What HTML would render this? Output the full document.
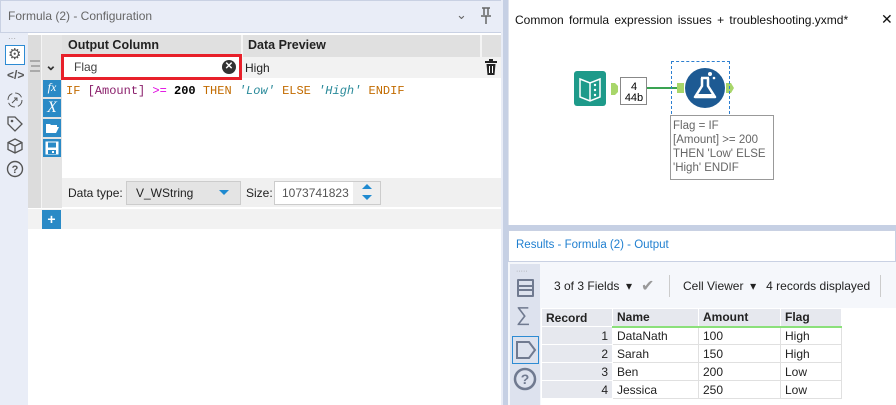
<!DOCTYPE html>
<html><head><meta charset="utf-8"><style>
*{box-sizing:border-box;margin:0;padding:0}
body{width:896px;height:405px;overflow:hidden;background:#fff;font-family:"Liberation Sans",sans-serif;font-size:12px;color:#222;position:relative}
.a{position:absolute}
.mono{font-family:"Liberation Mono",monospace}
</style></head><body>
<div class="a" style="left:0;top:0;width:503px;height:405px;background:#fff"></div>
<div class="a" style="left:0;top:0;width:503px;height:33px;background:#e9edf7;border:1px solid #c9d1e3"></div>
<div class="a" style="left:8px;top:9px;color:#666;font-size:12px">Formula (2) - Configuration</div>
<div class="a" style="left:456px;top:7px;color:#666;font-size:13px">⌄</div>
<svg class="a" style="left:479px;top:7px" width="14" height="18"><path d="M3 1h8M5 1v7M9 1v7M2 9h10M7 9v8" stroke="#666" stroke-width="1.5" fill="none"/></svg>
<div class="a" style="left:0;top:33px;width:28px;height:372px;background:#e9edf7"></div>
<div class="a" style="left:8px;top:34px;color:#999;font-size:8px">···</div>
<div class="a" style="left:5px;top:45px;width:20px;height:20px;border:1px solid #2d8bd3;background:#fff"></div>
<div class="a" style="left:8px;top:45px;color:#555;font-size:15px">⚙</div>
<div class="a" style="left:7px;top:68px;color:#555;font-size:12px;font-weight:bold">&lt;/&gt;</div>
<svg class="a" style="left:6px;top:91px" width="18" height="18"><circle cx="9" cy="9" r="7" fill="none" stroke="#555" stroke-dasharray="8 3"/><path d="M6 12l5-5M8 7h3v3" stroke="#555" fill="none"/></svg>
<svg class="a" style="left:6px;top:115px" width="18" height="18"><path d="M2 2h7l7 7-7 7-7-7z" fill="none" stroke="#555" stroke-width="1.3"/><circle cx="6" cy="6" r="1.3" fill="#555"/></svg>
<svg class="a" style="left:6px;top:137px" width="18" height="18"><path d="M9 2l7 3.5v7L9 16l-7-3.5v-7z M2 5.5L9 9l7-3.5M9 9v7" fill="none" stroke="#555" stroke-width="1.3"/></svg>
<svg class="a" style="left:6px;top:160px" width="18" height="18"><circle cx="9" cy="9" r="7.5" fill="none" stroke="#555" stroke-width="1.4"/><text x="9" y="13" font-size="11" text-anchor="middle" fill="#555" font-family="Liberation Sans" font-weight="bold">?</text></svg>
<div class="a" style="left:28px;top:35px;width:473px;height:22px;background:#e0e0e0"></div>
<div class="a" style="left:28px;top:35px;width:13px;height:173px;background:#dcdcdc"></div>
<div class="a" style="left:41px;top:35px;width:21px;height:173px;background:#e4e4e4;border-left:1px solid #f4f4f4"></div>
<div class="a" style="left:68px;top:38px;font-weight:bold;font-size:12.5px">Output Column</div>
<div class="a" style="left:241px;top:35px;width:2px;height:22px;background:#f4f4f4"></div>
<div class="a" style="left:248px;top:38px;font-weight:bold;font-size:12.5px">Data Preview</div>
<div class="a" style="left:480px;top:35px;width:2px;height:22px;background:#f4f4f4"></div>
<div class="a" style="left:62px;top:57px;width:439px;height:21px;background:#f2f2f2"></div>
<div class="a" style="left:30px;top:60px;width:10px;height:12px;border-top:2px solid #aaa;border-bottom:2px solid #aaa"></div>
<div class="a" style="left:31px;top:65px;width:9px;height:2px;background:#aaa"></div>
<div class="a" style="left:45px;top:57px;color:#333;font-size:14px;font-weight:bold">⌄</div>
<div class="a" style="left:61px;top:54px;width:181px;height:26px;border:3px solid #e8202a;background:#fff"></div>
<div class="a" style="left:74px;top:60px;color:#444">Flag</div>
<div class="a" style="left:222px;top:60px;width:14px;height:14px;border-radius:50%;background:#333;color:#fff;font-size:10px;text-align:center;line-height:14px;font-weight:bold">✕</div>
<div class="a" style="left:245px;top:61px">High</div>
<svg class="a" style="left:485px;top:59px" width="12" height="17"><rect x="0" y="2" width="12" height="2" fill="#222"/><rect x="4" y="0" width="4" height="2" fill="#222"/><path d="M1.5 5h9l-1 11h-7z" fill="#222"/><path d="M4.5 7v7M7.5 7v7" stroke="#fff"/></svg>
<div class="a" style="left:43px;top:80px;width:18px;height:17px;background:#2a8ac6;color:#fff;font-family:'Liberation Serif',serif;font-style:italic;font-size:12px;text-align:center">fx</div>
<div class="a" style="left:43px;top:99px;width:18px;height:18px;background:#2a8ac6;color:#fff;font-family:'Liberation Serif',serif;font-style:italic;font-size:16px;text-align:center;line-height:18px">X</div>
<div class="a" style="left:43px;top:119px;width:18px;height:18px;background:#2a8ac6"></div>
<svg class="a" style="left:45px;top:122px" width="14" height="12"><path d="M1 2h4l1 1h6v2H4l-3 6z M4 5h10l-3 6H1z" fill="#fff"/></svg>
<div class="a" style="left:43px;top:139px;width:18px;height:18px;background:#2a8ac6"></div>
<svg class="a" style="left:45px;top:141px" width="14" height="14"><rect x="0.5" y="0.5" width="13" height="13" fill="#fff"/><rect x="3" y="1.5" width="8" height="5" fill="#2a8ac6"/><rect x="3" y="9" width="8" height="4" fill="#2a8ac6"/><rect x="7" y="10" width="2" height="2" fill="#fff"/></svg>
<div class="a mono" style="left:66px;top:84px;font-size:12px;white-space:pre;color:#c26b00"><span>IF </span><span style="color:#8a1f6b">[Amount]</span> <span style="color:#e000e0">&gt;=</span> <b style="color:#000">200</b> THEN <i style="color:#2a8a9a">'Low'</i> ELSE <i style="color:#2a8a9a">'High'</i> ENDIF</div>
<div class="a" style="left:62px;top:178px;width:439px;height:29px;background:#f0f0f0"></div>
<div class="a" style="left:68px;top:186px">Data type:</div>
<div class="a" style="left:126px;top:181px;width:115px;height:24px;background:#e4e4e4;border:1px solid #ccc"></div>
<div class="a" style="left:136px;top:186px">V_WString</div>
<div class="a" style="left:219px;top:190px;width:0;height:0;border-left:5px solid transparent;border-right:5px solid transparent;border-top:5px solid #1f8ad0"></div>
<div class="a" style="left:246px;top:186px">Size:</div>
<div class="a" style="left:274px;top:181px;width:107px;height:24px;background:#fff;border:1px solid #ccc"></div>
<div class="a" style="left:282px;top:186px;color:#555">1073741823</div>
<div class="a" style="left:353px;top:182px;width:27px;height:22px;background:#eee"></div>
<div class="a" style="left:362px;top:184px;width:0;height:0;border-left:5px solid transparent;border-right:5px solid transparent;border-bottom:5px solid #1f8ad0"></div>
<div class="a" style="left:362px;top:195px;width:0;height:0;border-left:5px solid transparent;border-right:5px solid transparent;border-top:5px solid #1f8ad0"></div>
<div class="a" style="left:28px;top:209px;width:473px;height:20px;background:#f2f2f2"></div>
<div class="a" style="left:42px;top:210px;width:19px;height:19px;background:#2a8ac6;color:#fff;font-weight:bold;text-align:center;line-height:19px;font-size:14px">+</div>
<div class="a" style="left:503px;top:0;width:5px;height:405px;background:#c6d0e4"></div>
<div class="a" style="left:501px;top:0;width:2px;height:405px;background:#e9edf7"></div>
<div class="a" style="left:508px;top:0;width:388px;height:227px;background:#fff;border-left:1px solid #e0e4ee"></div>
<div class="a" style="left:515px;top:13px;font-size:12px;color:#111;word-spacing:2px">Common formula expression issues + troubleshooting.yxmd*</div>
<div class="a" style="left:881px;top:11px;font-size:14px;color:#111">✕</div>
<svg class="a" style="left:570px;top:66px" width="180" height="48">
<rect x="4" y="5" width="32" height="35" rx="3" fill="#1e9a8a"/>
<path d="M10 13l10 4 10-4v18l-10 4-10-4z" fill="none" stroke="#fff" stroke-width="1.5"/><path d="M20 17v18" stroke="#fff" stroke-width="1.5"/>
<circle cx="25" cy="19" r="1.2" fill="#fff"/><circle cx="25" cy="24" r="1.2" fill="#fff"/><circle cx="25" cy="29" r="1.2" fill="#fff"/>
<path d="M41 17h4l3 3v6l-3 3h-4z" fill="#a8d66a"/>
<rect x="50.5" y="11.5" width="26" height="27" fill="#fff" stroke="#888"/>
<text x="64" y="24" font-size="11" text-anchor="middle" font-family="Liberation Sans">4</text>
<text x="64" y="35" font-size="11" text-anchor="middle" font-family="Liberation Sans">44b</text>
<path d="M77 22h35" stroke="#3aa352" stroke-width="2"/>
<path d="M107 17h7v10h-7z" fill="#a8d66a"/>
<circle cx="135" cy="22" r="20" fill="#1d5a93"/>
<path d="M131 12h8M132 12v8l-7 11h20l-7-11v-8" fill="none" stroke="#fff" stroke-width="2.5" stroke-linejoin="round"/>
<path d="M127 28h16l-1 3h-14z" fill="#fff"/>
<circle cx="140" cy="8" r="2" fill="#fff"/><circle cx="144" cy="12" r="1.3" fill="#fff"/>
<path d="M156 17h5l3 5-3 5h-5z" fill="#a8d66a"/>
</svg>
<div class="a" style="left:671px;top:61px;width:59px;height:58px;border:1px dashed #2d7fd0"></div>
<div class="a" style="left:670px;top:115px;width:104px;height:65px;background:#fff;border:1px solid #999;color:#666;font-size:11.5px;line-height:14px;padding:3px 2px">Flag = IF<br>[Amount] &gt;= 200<br>THEN 'Low' ELSE<br>'High' ENDIF</div>
<div class="a" style="left:508px;top:225px;width:388px;height:5px;background:#c6d0e4"></div>
<div class="a" style="left:508px;top:230px;width:388px;height:32px;background:#fff;border:1px solid #c9d1e3"></div>
<div class="a" style="left:516px;top:239px;color:#1f7fd0;font-size:11.5px">Results - Formula (2) - Output</div>
<div class="a" style="left:508px;top:262px;width:388px;height:143px;background:#f5f7fb"></div>
<div class="a" style="left:510px;top:264px;width:30px;height:141px;background:#dde2ee"></div>
<div class="a" style="left:516px;top:268px;color:#999;font-size:7px">·····</div>
<div class="a" style="left:517px;top:279px;width:17px;height:18px;border:2px solid #707a90;border-radius:1px"></div>
<div class="a" style="left:517px;top:285px;width:17px;height:6px;border-top:2px solid #707a90;border-bottom:2px solid #707a90"></div>
<div class="a" style="left:516px;top:304px;color:#707a90;font-size:20px">∑</div>
<div class="a" style="left:512px;top:336px;width:27px;height:28px;border:1px solid #2d8bd3"></div>
<svg class="a" style="left:515px;top:339px" width="22" height="22"><path d="M2 3h12l6 8-6 8H2z" fill="none" stroke="#707a90" stroke-width="2"/></svg>
<svg class="a" style="left:513px;top:367px" width="24" height="24"><circle cx="12" cy="12" r="10" fill="none" stroke="#707a90" stroke-width="2.5"/><text x="12" y="17" font-size="14" text-anchor="middle" fill="#707a90" font-family="Liberation Sans" font-weight="bold">?</text></svg>
<div class="a" style="left:541px;top:262px;width:355px;height:46px;background:#f5f7fb"></div>
<div class="a" style="left:554px;top:279px">3 of 3 Fields&nbsp;&nbsp;▾</div>
<div class="a" style="left:641px;top:276px;color:#999;font-size:16px">✔</div>
<div class="a" style="left:669px;top:275px;width:1px;height:22px;background:#ccc"></div>
<div class="a" style="left:683px;top:279px">Cell Viewer&nbsp;&nbsp;▾&nbsp;&nbsp;&nbsp;4 records displayed</div>
<div class="a" style="left:880px;top:275px;width:1px;height:22px;background:#ccc"></div>
<div class="a" style="left:541px;top:308px;width:355px;height:97px;background:#fff"></div>
<table class="a" style="left:541px;top:308px;border-collapse:collapse;font-size:12px">
<tr style="background:#e6e8ee;font-weight:bold;height:18px"><td style="width:71px;padding-left:4px;border:1px solid #fff">Record</td><td style="width:86px;padding-left:4px;border:1px solid #fff;border-bottom:2px solid #8be07a">Name</td><td style="width:82px;padding-left:4px;border:1px solid #fff;border-bottom:2px solid #8be07a">Amount</td><td style="width:61px;padding-left:4px;border:1px solid #fff;border-bottom:2px solid #8be07a">Flag</td></tr>
<tr style="height:18px"><td style="background:#e6e8ee;text-align:right;padding-right:4px;border:1px solid #fff">1</td><td style="padding-left:4px;border:1px solid #e0e0e0">DataNath</td><td style="padding-left:4px;border:1px solid #e0e0e0">100</td><td style="padding-left:4px;border:1px solid #e0e0e0">High</td></tr>
<tr style="height:18px"><td style="background:#e6e8ee;text-align:right;padding-right:4px;border:1px solid #fff">2</td><td style="padding-left:4px;border:1px solid #e0e0e0">Sarah</td><td style="padding-left:4px;border:1px solid #e0e0e0">150</td><td style="padding-left:4px;border:1px solid #e0e0e0">High</td></tr>
<tr style="height:18px"><td style="background:#e6e8ee;text-align:right;padding-right:4px;border:1px solid #fff">3</td><td style="padding-left:4px;border:1px solid #e0e0e0">Ben</td><td style="padding-left:4px;border:1px solid #e0e0e0">200</td><td style="padding-left:4px;border:1px solid #e0e0e0">Low</td></tr>
<tr style="height:18px"><td style="background:#e6e8ee;text-align:right;padding-right:4px;border:1px solid #fff">4</td><td style="padding-left:4px;border:1px solid #e0e0e0">Jessica</td><td style="padding-left:4px;border:1px solid #e0e0e0">250</td><td style="padding-left:4px;border:1px solid #e0e0e0">Low</td></tr>
</table>
</body></html>
